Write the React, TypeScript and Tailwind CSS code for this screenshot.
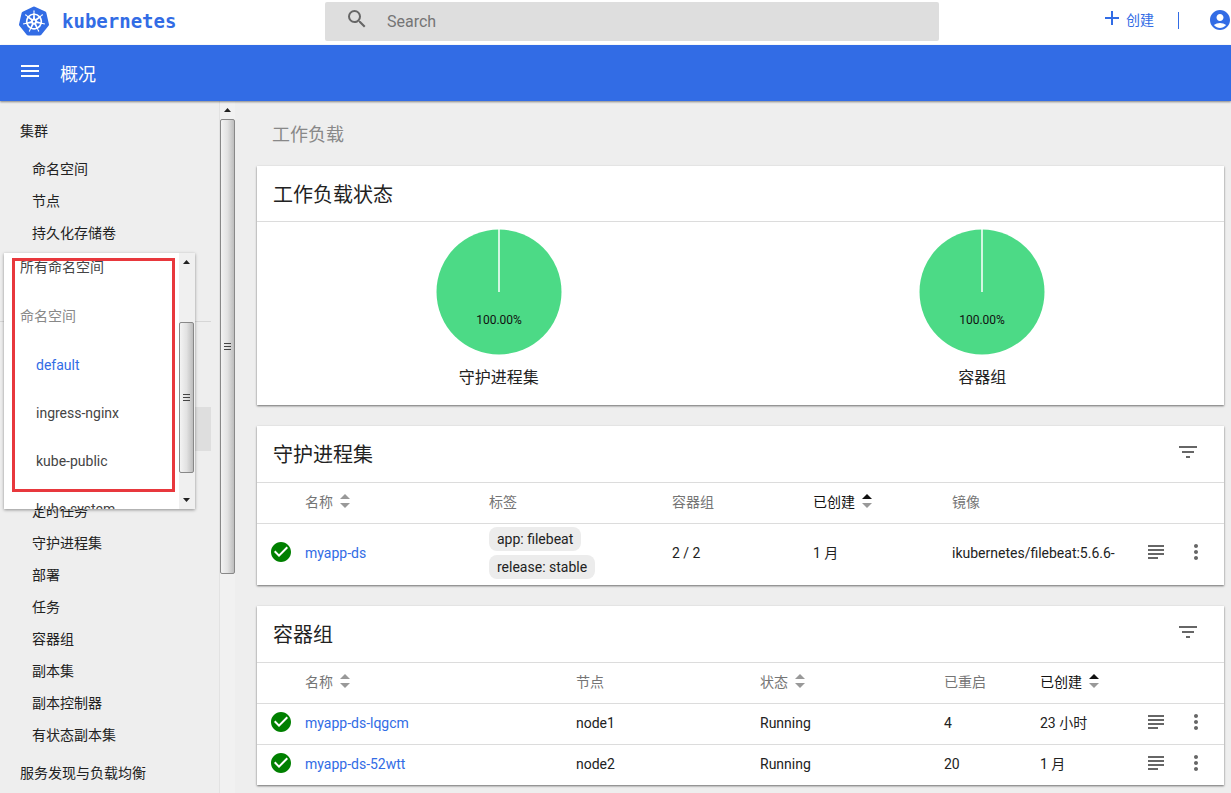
import type { ReactNode } from "react"
import {
  MdAccountCircle,
  MdAdd,
  MdCheckCircle,
  MdFilterList,
  MdMenu,
  MdMoreVert,
  MdSearch,
  MdSubject,
} from "react-icons/md"
import { SiKubernetes } from "react-icons/si"

const clusterLinks = ["命名空间", "节点", "持久化存储卷"]

const workloadLinks = [
  "定时任务",
  "守护进程集",
  "部署",
  "任务",
  "容器组",
  "副本集",
  "副本控制器",
  "有状态副本集",
]

const namespaces = ["default", "ingress-nginx", "kube-public", "kube-system"]

const pods = [
  { name: "myapp-ds-lqgcm", node: "node1", status: "Running", restarts: 4, age: "23 小时" },
  { name: "myapp-ds-52wtt", node: "node2", status: "Running", restarts: 20, age: "1 月" },
]

function Header() {
  return (
    <header className="flex h-[45px] shrink-0 items-start bg-white">
      <a href="#" className="flex w-[325px] shrink-0 items-center gap-[13px] pt-1.5 pl-[19px] text-[#326ce5]">
        <SiKubernetes className="size-[30px]" />
        <span className="font-['DejaVu_Sans_Mono',monospace] text-[19px] leading-[30px] font-bold">kubernetes</span>
      </a>
      <label className="mt-0.5 flex h-[39px] grow items-start rounded-xs bg-[#dedede] pl-5">
        <MdSearch className="mt-[5px] size-6 shrink-0 text-[#666]" />
        <input
          type="text"
          placeholder="Search"
          aria-label="Search"
          className="ml-[18px] h-[39px] w-full bg-transparent text-base outline-none placeholder:text-[#757575]"
        />
      </label>
      <div className="flex w-[292px] shrink-0 items-start justify-end pt-1.5 text-[#326ce5]">
        <button type="button" className="flex items-start gap-0.5 text-sm">
          <MdAdd className="size-6" />
          <span className="leading-7">创建</span>
        </button>
        <span className="ml-6 h-[17px] w-px shrink-0 self-center bg-[#326ce5]" />
        <button type="button" aria-label="Account" className="ml-[29px] -mr-px pt-0.5">
          <MdAccountCircle className="size-6" />
        </button>
      </div>
    </header>
  )
}

function Toolbar() {
  return (
    <div className="z-10 flex h-14 shrink-0 items-center bg-[#326ce5] pl-[18px] text-white shadow-[0_1px_2px_rgba(0,0,0,0.45)]">
      <button type="button" aria-label="Menu" className="mb-1">
        <MdMenu className="size-6" />
      </button>
      <h1 className="ml-[18px] pt-1 text-lg leading-6">概况</h1>
    </div>
  )
}

function ScrollArrow({ down = false }: { down?: boolean }) {
  return (
    <svg viewBox="0 0 7 4" className="h-1 w-[7px] shrink-0" aria-hidden="true">
      <path d={down ? "M0 0h7L3.5 4z" : "M0 4h7L3.5 0z"} fill="#222" />
    </svg>
  )
}

function ScrollThumb({ className }: { className: string }) {
  return (
    <div
      className={`flex w-[15px] shrink-0 flex-col items-center justify-center gap-0.5 rounded-xs border border-[#888] bg-linear-to-r from-[#f3f3f3] via-[#e2e2e2] to-[#bdbdbd] ${className}`}
    >
      <span className="h-px w-[7px] bg-[#444]" />
      <span className="h-px w-[7px] bg-[#444]" />
      <span className="h-px w-[7px] bg-[#444]" />
    </div>
  )
}

function NamespaceMenu() {
  return (
    <div className="absolute top-[152px] left-1 flex h-64 w-[191px] overflow-hidden bg-white shadow-[0_1px_3px_rgba(0,0,0,0.4)]">
      <div role="listbox" aria-label="命名空间" className="-mt-2.5 grow text-sm text-[#444]">
        <button type="button" role="option" aria-selected="false" className="block h-12 w-full pl-4 text-left">
          所有命名空间
        </button>
        <div className="flex h-[50px] items-center pl-4 text-[#888]">命名空间</div>
        {namespaces.map((ns) => (
          <button
            key={ns}
            type="button"
            role="option"
            aria-selected={ns === "default"}
            className={`block h-12 w-full pl-8 text-left ${ns === "default" ? "text-[#326ce5]" : ""}`}
          >
            {ns}
          </button>
        ))}
      </div>
      <div className="flex w-4 flex-col items-center bg-[#f0f0f0] py-[7px] pr-px">
        <ScrollArrow />
        <ScrollThumb className="mt-[58px] h-[151px]" />
        <span className="grow" />
        <ScrollArrow down />
      </div>
      <div className="absolute top-[5px] left-2 h-[234px] w-[163px] border-3 border-[#e8383d]" />
    </div>
  )
}

function NavLink({ label }: { label: string }) {
  return (
    <li>
      <a href="#" className="block pl-8 text-sm leading-8">
        {label}
      </a>
    </li>
  )
}

function Sidebar() {
  return (
    <div className="relative flex w-[236px] shrink-0">
      <nav className="w-[219px] overflow-hidden pt-3.5 text-[#222]">
        <h2 className="pl-5 text-sm leading-8">集群</h2>
        <ul className="mt-1.5">
          {clusterLinks.map((label) => (
            <NavLink key={label} label={label} />
          ))}
        </ul>
        <div className="mr-2 h-[73px] border-b border-[#d6d6d6]" />
        <div className="mt-[85px] mr-2 ml-1 h-11 bg-[#dedede]" />
        <ul className="mt-11">
          {workloadLinks.map((label) => (
            <NavLink key={label} label={label} />
          ))}
        </ul>
        <h2 className="mt-1.5 pl-5 text-sm leading-8">服务发现与负载均衡</h2>
      </nav>
      <div className="flex w-4 flex-col items-center border-l border-[#e2e2e2] bg-[#f1f1f1] pt-[7px]">
        <ScrollArrow />
        <ScrollThumb className="mt-[7px] h-[455px]" />
      </div>
      <NamespaceMenu />
    </div>
  )
}

function Card({ children }: { children: ReactNode }) {
  return <section className="bg-white shadow-[0_1px_2px_rgba(0,0,0,0.55)]">{children}</section>
}

function CardHeader({ title }: { title: string }) {
  return (
    <div className="flex h-14 items-center justify-between pr-6 pl-4">
      <h3 className="pt-0.5 text-xl">{title}</h3>
      <button type="button" aria-label="Filter" className="mb-1 text-[#666]">
        <MdFilterList className="size-6" />
      </button>
    </div>
  )
}

function PieChart({ label }: { label: string }) {
  return (
    <figure className="flex flex-1 flex-col items-center pt-[7px]">
      <svg viewBox="0 0 126 126" className="size-[126px]">
        <circle cx="63" cy="63" r="62.5" fill="#4cda86" />
        <path d="M63 0v63" stroke="#fff" strokeWidth="1.5" />
        <text x="63" y="95" textAnchor="middle" fontSize="12" fill="#111">
          100.00%
        </text>
      </svg>
      <figcaption className="mt-[11px] text-base leading-6">{label}</figcaption>
    </figure>
  )
}

function SortIcon({ active = false }: { active?: boolean }) {
  return (
    <svg viewBox="0 0 10 14" className="mb-0.5 h-3.5 w-2.5" aria-hidden="true">
      <path d="M0 5h10L5 0z" fill={active ? "#111" : "#999"} />
      <path d="M0 9h10l-5 5z" fill="#999" />
    </svg>
  )
}

function Th({ label, sortable = false, active = false }: { label: string; sortable?: boolean; active?: boolean }) {
  return (
    <th scope="col" className={`p-0 pb-0.5 text-left font-normal ${active ? "text-[#111]" : "text-[#757575]"}`}>
      {sortable ? (
        <button type="button" className="flex items-center gap-[7px]">
          {label}
          <SortIcon active={active} />
        </button>
      ) : (
        label
      )}
    </th>
  )
}

function Td({ children }: { children: ReactNode }) {
  return <td className="p-0 pb-0.5 whitespace-nowrap">{children}</td>
}

function StatusCell() {
  return (
    <td className="p-0 pb-1 pl-3">
      <MdCheckCircle className="size-6 text-[#008000]" aria-label="OK" />
    </td>
  )
}

function ActionsCell() {
  return (
    <td className="p-0 pr-4 pb-1">
      <div className="flex items-center justify-end gap-4 text-[#666]">
        <button type="button" aria-label="Logs">
          <MdSubject className="size-6" />
        </button>
        <button type="button" aria-label="Actions">
          <MdMoreVert className="size-6" />
        </button>
      </div>
    </td>
  )
}

function DaemonSets() {
  return (
    <Card>
      <CardHeader title="守护进程集" />
      <table className="w-full table-fixed text-sm">
        <colgroup>
          <col className="w-[48px]" />
          <col className="w-[184px]" />
          <col className="w-[183px]" />
          <col className="w-[141px]" />
          <col className="w-[139px]" />
          <col className="w-[182px]" />
          <col className="w-[90px]" />
        </colgroup>
        <thead>
          <tr className="h-[41px] border-t border-[#dcdcdc]">
            <td />
            <Th label="名称" sortable />
            <Th label="标签" />
            <Th label="容器组" />
            <Th label="已创建" sortable active />
            <Th label="镜像" />
            <td />
          </tr>
        </thead>
        <tbody>
          <tr className="h-[61px] border-t border-[#dcdcdc]">
            <StatusCell />
            <Td>
              <a href="#" className="text-[#326ce5]">
                myapp-ds
              </a>
            </Td>
            <Td>
              <div className="flex flex-col items-start gap-1">
                <span className="rounded-lg bg-[#ececec] px-2 leading-6">app: filebeat</span>
                <span className="rounded-lg bg-[#ececec] px-2 leading-6">release: stable</span>
              </div>
            </Td>
            <Td>2 / 2</Td>
            <Td>1 月</Td>
            <Td>ikubernetes/filebeat:5.6.6-</Td>
            <ActionsCell />
          </tr>
        </tbody>
      </table>
    </Card>
  )
}

function Pods() {
  return (
    <Card>
      <CardHeader title="容器组" />
      <table className="w-full table-fixed text-sm">
        <colgroup>
          <col className="w-[48px]" />
          <col className="w-[271px]" />
          <col className="w-[184px]" />
          <col className="w-[184px]" />
          <col className="w-[96px]" />
          <col className="w-[94px]" />
          <col className="w-[90px]" />
        </colgroup>
        <thead>
          <tr className="h-[41px] border-t border-[#dcdcdc]">
            <td />
            <Th label="名称" sortable />
            <Th label="节点" />
            <Th label="状态" sortable />
            <Th label="已重启" />
            <Th label="已创建" sortable active />
            <td />
          </tr>
        </thead>
        <tbody>
          {pods.map((pod) => (
            <tr key={pod.name} className="h-[41px] border-t border-[#dcdcdc]">
              <StatusCell />
              <Td>
                <a href="#" className="text-[#326ce5]">
                  {pod.name}
                </a>
              </Td>
              <Td>{pod.node}</Td>
              <Td>{pod.status}</Td>
              <Td>{pod.restarts}</Td>
              <Td>{pod.age}</Td>
              <ActionsCell />
            </tr>
          ))}
        </tbody>
      </table>
    </Card>
  )
}

export default function App() {
  return (
    <div className="flex h-screen flex-col overflow-hidden bg-[#eee] font-[Roboto,'Noto_Sans_CJK_SC',sans-serif] text-[#222]">
      <Header />
      <Toolbar />
      <div className="flex min-h-0 grow">
        <Sidebar />
        <main className="flex min-w-0 grow flex-col gap-[21px] overflow-hidden pr-[7px] pl-[21px]">
          <h2 className="-mb-[21px] h-[65px] shrink-0 pl-[15px] text-lg leading-[68px] text-[#888]">工作负载</h2>
          <Card>
            <h3 className="flex h-14 items-center border-b border-[#dcdcdc] pt-0.5 pl-4 text-xl">工作负载状态</h3>
            <div className="flex h-[183px]">
              <PieChart label="守护进程集" />
              <PieChart label="容器组" />
            </div>
          </Card>
          <DaemonSets />
          <Pods />
        </main>
      </div>
    </div>
  )
}
